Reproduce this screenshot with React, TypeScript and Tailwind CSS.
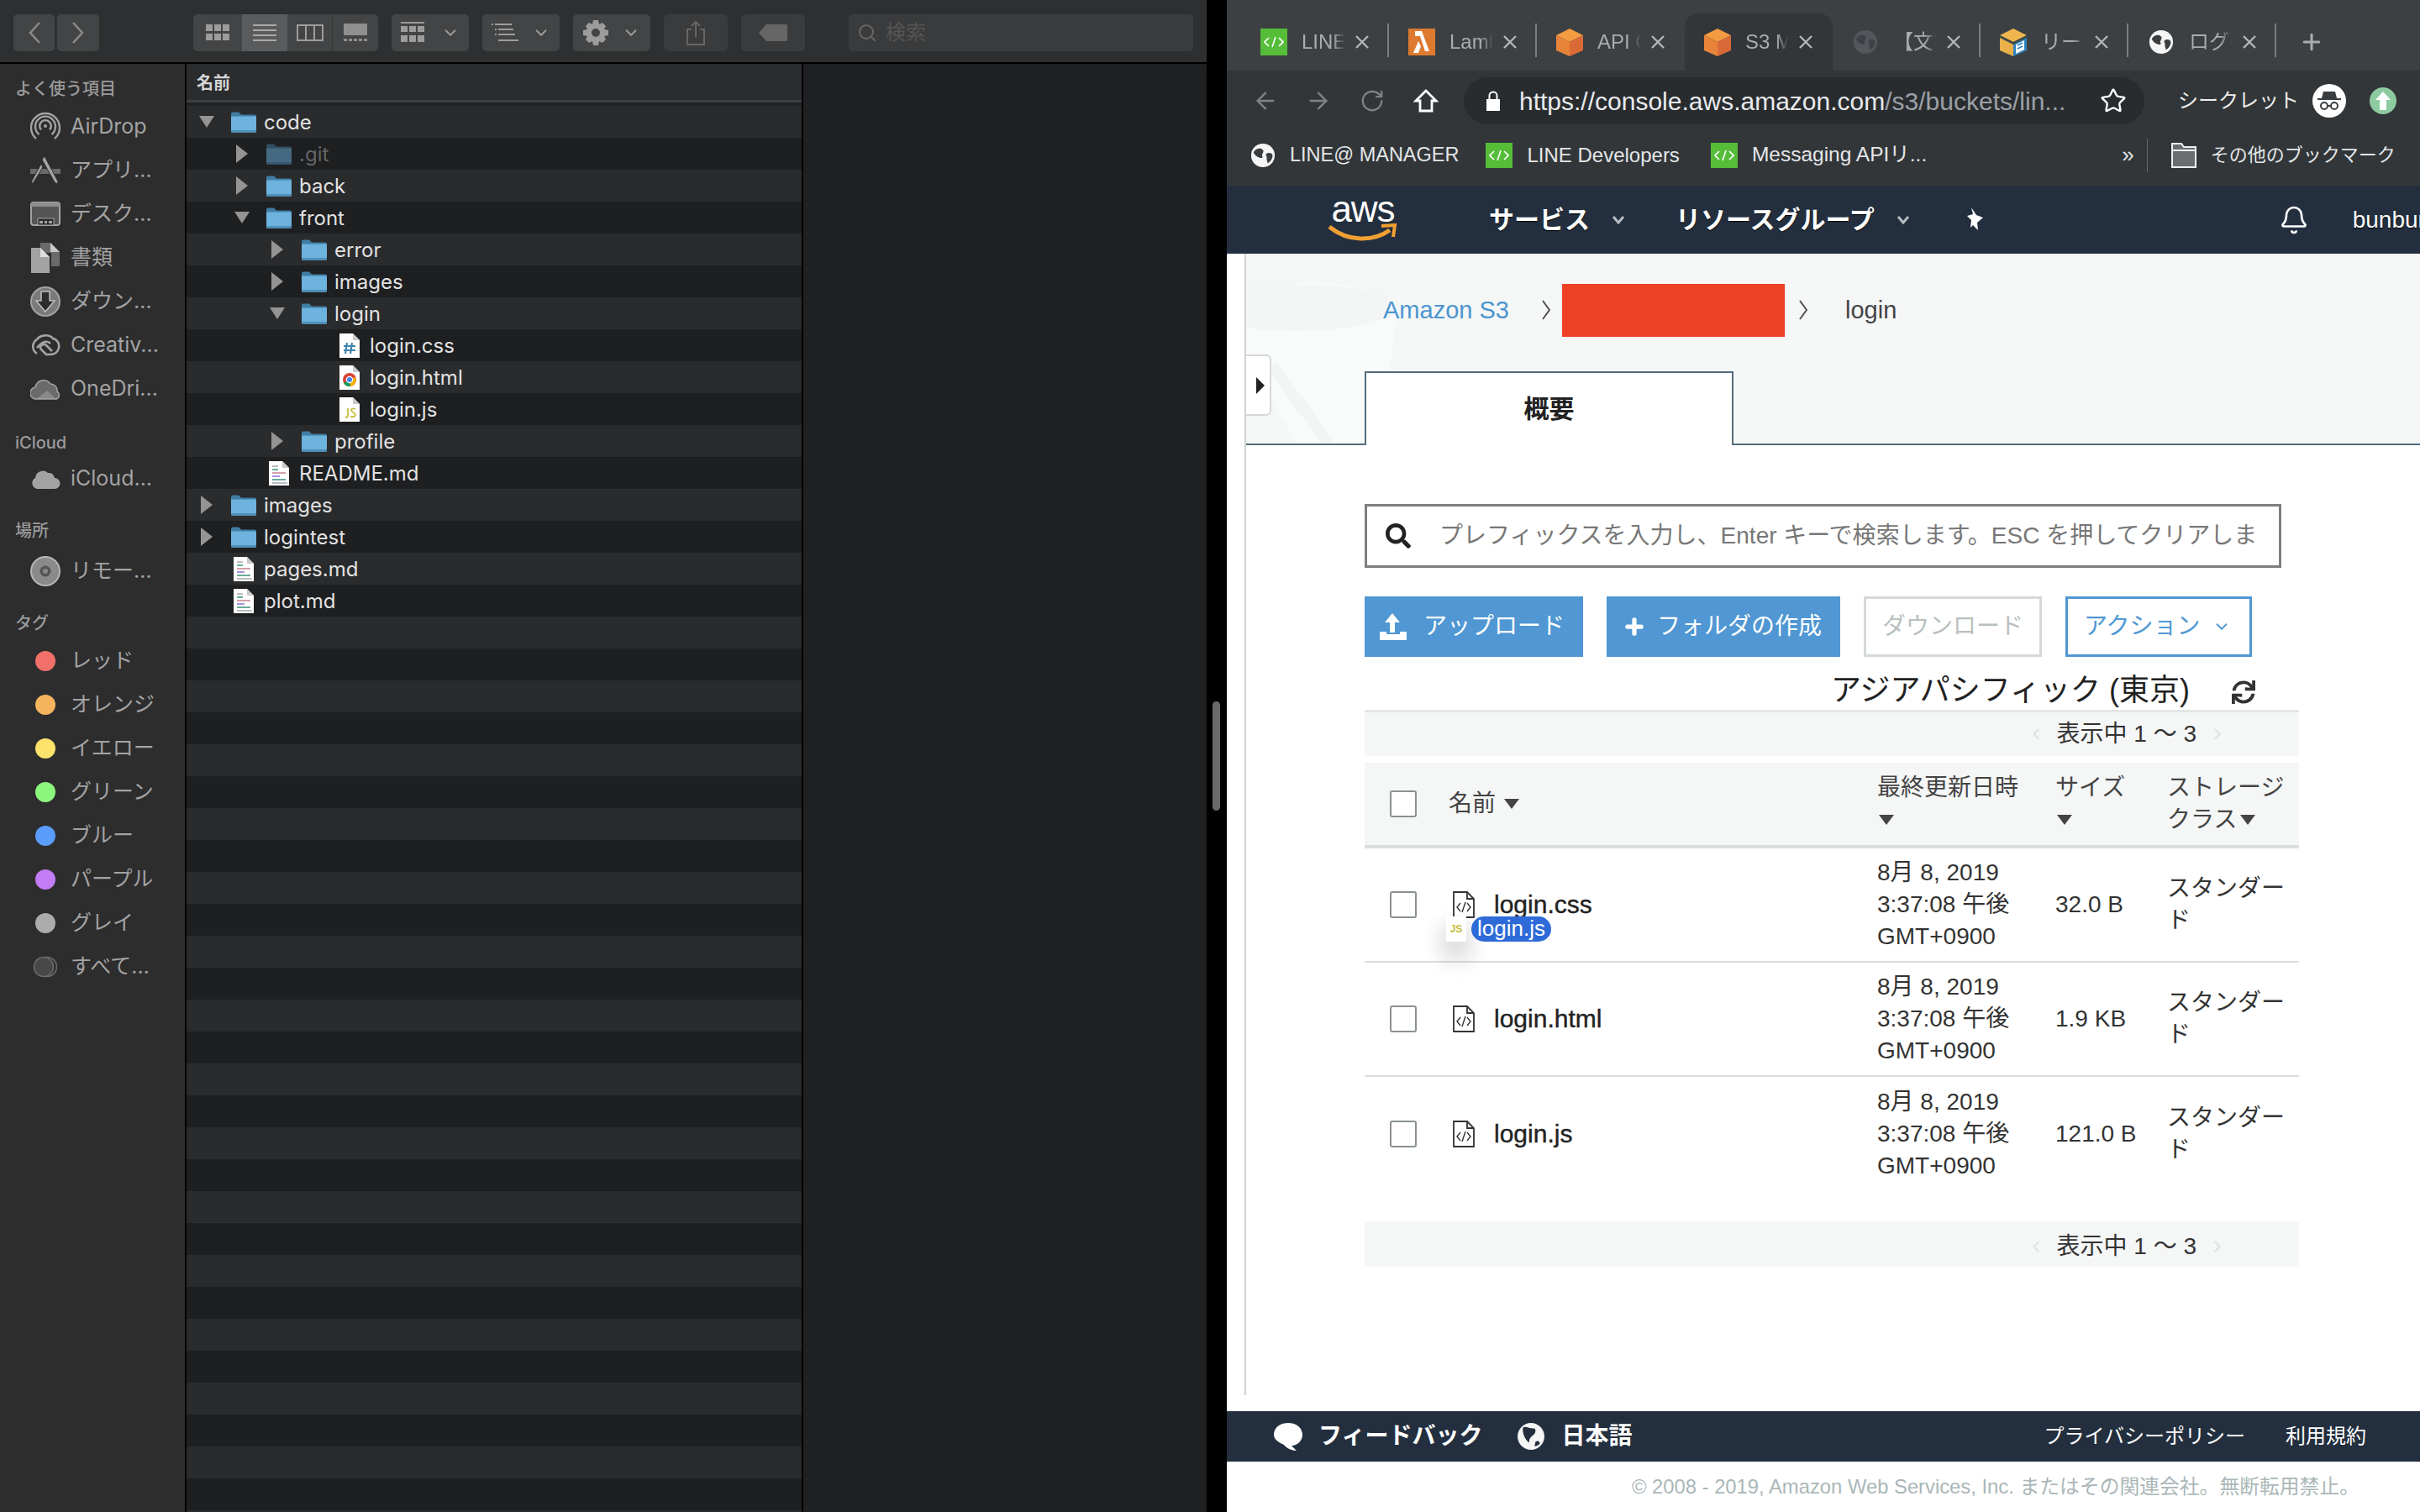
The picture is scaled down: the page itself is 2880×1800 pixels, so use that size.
import React from "react";
import { ArrowLeft, ArrowRight, RotateCw, Star, ChevronDown, ChevronRight, ChevronLeft, Plus, Bell, Search } from "lucide-react";
import { FaSearch, FaSync } from "react-icons/fa";

const Folder = ({ dim }: { dim?: boolean }) => (
  <svg width="30" height="25" viewBox="0 0 30 25" className={dim ? "opacity-50" : ""}>
    <path d="M0 2.5A2 2 0 0 1 2 .5h7l3 3h16a2 2 0 0 1 2 2V10H0z" fill="#3f7da3" />
    <path d="M0 5.5h30V23a2 2 0 0 1-2 2H2a2 2 0 0 1-2-2z" fill="#6db3de" />
    <path d="M0 22h30v1a2 2 0 0 1-2 2H2a2 2 0 0 1-2-2z" fill="#4f8fb8" />
  </svg>
);

const Sheet = ({ children }: { children?: React.ReactNode }) => (
  <svg width="24" height="29" viewBox="0 0 24 29">
    <path d="M0 0h16l8 8v21H0z" fill="#fff" />
    <path d="M16 0l8 8h-8z" fill="#c9c9c9" />
    {children}
  </svg>
);

const FileIcon = ({ kind }: { kind: string }) => {
  if (kind === "css")
    return (
      <Sheet>
        <path d="M9 11l-2 13M15 11l-2 13M5 15h14M5 20h14" stroke="#3f87ad" strokeWidth="2.2" fill="none" />
      </Sheet>
    );
  if (kind === "html")
    return (
      <Sheet>
        <circle cx="12" cy="17" r="8" fill="#db4437" />
        <path d="M12 17L5 21a8 8 0 0 0 8 4z" fill="#0f9d58" />
        <path d="M12 17l7-3a8 8 0 0 1-6 11z" fill="#f4b400" />
        <circle cx="12" cy="17" r="3.6" fill="#4285f4" stroke="#fff" strokeWidth="1.2" />
      </Sheet>
    );
  if (kind === "js")
    return (
      <Sheet>
        <path d="M10 13v9q0 2-3 2M19 14q-4-1.500-5 1c0 3 5 3 5 6q-1 3-6 2" stroke="#c5bd3c" strokeWidth="1.8" fill="none" />
      </Sheet>
    );
  return (
    <Sheet>
      <rect x="4" y="5" width="7" height="2" fill="#b9bfc0" />
      <rect x="4" y="9" width="7" height="2" fill="#69ab9d" />
      <rect x="4" y="13" width="16" height="2" fill="#d3a1a8" />
      <rect x="4" y="17" width="9" height="2" fill="#a992e0" />
      <rect x="4" y="21" width="16" height="2" fill="#69ab9d" />
      <rect x="4" y="25" width="18" height="2" fill="#b9bfc0" />
    </Sheet>
  );
};

const Tri = ({ dir }: { dir?: string }) =>
  dir === "r" ? (
    <svg width="16" height="24" viewBox="0 0 16 24"><path d="M1 1l14 11L1 23z" fill="#949494" /></svg>
  ) : dir === "d" ? (
    <svg width="20" height="16" viewBox="0 0 20 16"><path d="M1 1h18L10 15z" fill="#949494" /></svg>
  ) : null;

type TreeRow = { n: string; d: number; t?: string; k?: string; dim?: boolean };
const tree: TreeRow[] = [
  { n: "code", d: 0, t: "d" },
  { n: ".git", d: 1, t: "r", dim: true },
  { n: "back", d: 1, t: "r" },
  { n: "front", d: 1, t: "d" },
  { n: "error", d: 2, t: "r" },
  { n: "images", d: 2, t: "r" },
  { n: "login", d: 2, t: "d" },
  { n: "login.css", d: 3, k: "css" },
  { n: "login.html", d: 3, k: "html" },
  { n: "login.js", d: 3, k: "js" },
  { n: "profile", d: 2, t: "r" },
  { n: "README.md", d: 1, k: "md" },
  { n: "images", d: 0, t: "r" },
  { n: "logintest", d: 0, t: "r" },
  { n: "pages.md", d: 0, k: "md" },
  { n: "plot.md", d: 0, k: "md" },
];
const indent = ["pl-[13px]", "pl-[55px]", "pl-[97px]", "pl-[139px]"];
const blanks = Array.from({ length: 29 }, (_, i) => i);

const s = { stroke: "#a3a3a3", fill: "none" };
const SideIcons: Record<string, React.ReactNode> = {
  air: (
    <svg width="36" height="36" viewBox="0 0 36 36" {...s} strokeWidth="2.400">
      <path d="M7 32a17 17 0 1 1 22 0" />
      <path d="M10.500 27a12 12 0 1 1 15 0" />
      <path d="M13 21.500a6.800 6.800 0 1 1 10 0" />
      <circle cx="18" cy="17" r="2" fill="#a3a3a3" stroke="none" />
    </svg>
  ),
  app: (
    <svg width="36" height="36" viewBox="0 0 36 36">
      <path d="M0 16h36v6H0z" fill="#6a6a6a" />
      <path d="M17 1l16 30-1 3-3-2L14 5zM13 10L2 30l-1 4 3-2L15 14z" fill="#a3a3a3" stroke="#2d2d2e" strokeWidth="1" />
    </svg>
  ),
  desk: (
    <svg width="36" height="30" viewBox="0 0 36 30">
      <rect x="1" y="1" width="34" height="27" rx="3" fill="#555" stroke="#a3a3a3" strokeWidth="2" />
      <rect x="1" y="1" width="34" height="5" fill="#8e8e8e" />
      <rect x="9" y="20" width="19" height="8" fill="#2d2d2e" stroke="#a3a3a3" />
      <path d="M11 23h4v3h-4zM17 23h3v3h-3zM22 23h4v3h-4z" fill="#a3a3a3" />
    </svg>
  ),
  doc: (
    <svg width="34" height="36" viewBox="0 0 34 36">
      <path d="M11 0h12l11 11v17H24V12H11z" fill="#6a6a6a" />
      <path d="M23 0l11 11H23z" fill="#c9c9c9" />
      <path d="M0 6h11l11 11v19H0z" fill="#a3a3a3" />
      <path d="M11 6l11 11H11z" fill="#dedede" />
    </svg>
  ),
  down: (
    <svg width="36" height="36" viewBox="0 0 36 36">
      <circle cx="18" cy="18" r="17" fill="#7a7a7a" stroke="#a3a3a3" strokeWidth="2" />
      <path d="M13 6h10v11h6L18 30 7 17h6z" fill="#2d2d2e" stroke="#c0c0c0" strokeWidth="1.500" />
    </svg>
  ),
  cc: (
    <svg width="36" height="28" viewBox="0 0 36 28" {...s} strokeWidth="2.600">
      <path d="M8 24a10 10 0 0 1 0-17C12 2 22 0 27 6c5 1 8 6 7 11-1 5-5 8-10 8h-5l-6-6c-3-3 2-8 6-5l7 7" />
      <path d="M24 12c-3-4-9-2-12 1l-4 4" />
    </svg>
  ),
  one: (
    <svg width="36" height="26" viewBox="0 0 36 26">
      <path d="M8 25a7 7 0 0 1-2-14 10 10 0 0 1 18-4 8 8 0 0 1 8 9 5 5 0 0 1-1 9z" fill="#6a6a6a" stroke="#a3a3a3" strokeWidth="1.500" />
      <path d="M7 25l13-10 11 10z" fill="#a3a3a3" opacity=".55" />
    </svg>
  ),
  cloud: (
    <svg width="36" height="24" viewBox="0 0 36 24"><path d="M8 24a7 7 0 0 1-2-13 9 9 0 0 1 15-6 7 7 0 0 1 8 6 6.500 6.500 0 0 1 0 13z" fill="#a3a3a3" /></svg>
  ),
  disc: (
    <svg width="36" height="36" viewBox="0 0 36 36">
      <circle cx="18" cy="18" r="17" fill="#8a8a8a" stroke="#b5b5b5" strokeWidth="2" />
      <circle cx="18" cy="18" r="6.500" fill="#555" />
      <circle cx="18" cy="18" r="3" fill="#8a8a8a" />
    </svg>
  ),
};

const SideHead = ({ children, cls }: { children: React.ReactNode; cls: string }) => (
  <div className={`h-[28px] pl-[18px] text-[20px] leading-[28px] font-medium text-[#9b9b9b] ${cls}`}>{children}</div>
);
const SideItem = ({ icon, label }: { icon: React.ReactNode; label: string }) => (
  <div className="h-[52px] flex items-center">
    <div className="w-[36px] ml-[36px] flex justify-center shrink-0">{icon}</div>
    <span className="ml-[12px] text-[25px] text-[#a3a3a3] whitespace-nowrap">{label}</span>
  </div>
);
const Dot = ({ cls }: { cls: string }) => <div className={`w-[24px] h-[24px] rounded-full ${cls}`} />;

const Tool = ({ cls, children, dim }: { cls: string; children: React.ReactNode; dim?: boolean }) => (
  <div className={`h-[44px] rounded-[5px] flex items-center justify-center shrink-0 ${dim ? "bg-[#3a3b3c]" : "bg-[#434445]"} ${cls}`}>{children}</div>
);

const Finder = () => (
  <div className="w-[1436px] h-full flex flex-col bg-[#1f2022] [font-family:Inter,'Noto_Sans_CJK_JP',sans-serif]">
    <div className="h-[76px] shrink-0 bg-[#2e2f31] border-b-2 border-black flex items-center pl-[16px] pt-[4px]">
      <Tool cls="w-[49px]">
        <svg width="16" height="28" viewBox="0 0 16 28" fill="none" stroke="#8b8b8b" strokeWidth="2.500"><path d="M14 2L3 14l11 12" /></svg>
      </Tool>
      <Tool cls="w-[50px] ml-[3px]">
        <svg width="16" height="28" viewBox="0 0 16 28" fill="none" stroke="#8b8b8b" strokeWidth="2.500"><path d="M2 2l11 12L2 26" /></svg>
      </Tool>
      <div className="ml-[112px] w-[220px] h-[44px] rounded-[5px] bg-[#434445] flex overflow-hidden shrink-0">
        <div className="w-[58px] flex items-center justify-center">
          <svg width="28" height="20" viewBox="0 0 28 20" fill="#9c9c9c"><path d="M0 0h8v8H0zM10 0h8v8h-8zM20 0h8v8h-8zM0 11h8v8H0zM10 11h8v8h-8zM20 11h8v8h-8z" /></svg>
        </div>
        <div className="w-[54px] bg-[#5a5b5c] flex items-center justify-center">
          <svg width="28" height="20" viewBox="0 0 28 20" fill="#a9a9a9"><path d="M0 0h28v2H0zM0 6h28v2H0zM0 12h28v2H0zM0 18h28v2H0z" /></svg>
        </div>
        <div className="w-[54px] flex items-center justify-center border-r border-[#333]">
          <svg width="32" height="20" viewBox="0 0 32 20" fill="none" stroke="#9c9c9c" strokeWidth="2"><path d="M1 1h30v18H1zM11 1v18M21 1v18" /></svg>
        </div>
        <div className="w-[54px] flex items-center justify-center">
          <svg width="28" height="22" viewBox="0 0 28 22" fill="#8f8f8f"><path d="M0 0h28v14H0zM0 18h4v3H0zM6 18h4v3H6zM12 18h4v3h-4zM18 18h4v3h-4zM24 18h4v3h-4z" /></svg>
        </div>
      </div>
      <Tool cls="w-[92px] ml-[16px] gap-[20px]">
        <svg width="28" height="26" viewBox="0 0 28 26" fill="#9c9c9c"><path d="M0 0h28v2H0zM0 5h8v7H0zM10 5h8v7h-8zM20 5h8v7h-8zM0 16h8v8H0zM10 16h8v8h-8zM20 16h8v8h-8z" /></svg>
        <ChevronDown size={22} color="#9c9c9c" />
      </Tool>
      <Tool cls="w-[92px] ml-[16px] gap-[16px]">
        <svg width="32" height="22" viewBox="0 0 32 22" fill="#9c9c9c"><path d="M4 0h20v2H4zM8 6h18v2H8zM8 12h20v2H8zM8 19h24v2H8zM0 0h2v2H0zM4 6h2v2H4zM4 12h2v2H4z" /></svg>
        <ChevronDown size={22} color="#9c9c9c" />
      </Tool>
      <Tool cls="w-[92px] ml-[16px] gap-[16px]">
        <svg width="30" height="30" viewBox="0 0 30 30" fill="#9c9c9c"><path fillRule="evenodd" d="M12 0h6l1 5 4-2 4 4-2 4 5 1v6l-5 1 2 4-4 4-4-2-1 5h-6l-1-5-4 2-4-4 2-4-5-1v-6l5-1-2-4 4-4 4 2zM15 10a5 5 0 1 0 0 10 5 5 0 0 0 0-10z" /></svg>
        <ChevronDown size={22} color="#9c9c9c" />
      </Tool>
      <Tool cls="w-[76px] ml-[16px]" dim>
        <svg width="24" height="30" viewBox="0 0 24 30" fill="none" stroke="#666" strokeWidth="2"><path d="M7 11H2v18h20V11h-5M12 20V2M7 7l5-5 5 5" /></svg>
      </Tool>
      <Tool cls="w-[76px] ml-[16px]" dim>
        <svg width="34" height="20" viewBox="0 0 34 20" fill="#666"><path d="M9 0h23a2 2 0 0 1 2 2v16a2 2 0 0 1-2 2H9L0 10z" /></svg>
      </Tool>
      <div className="ml-[52px] w-[410px] h-[44px] rounded-[5px] bg-[#3a3b3c] flex items-center pl-[10px] gap-[10px] shrink-0">
        <Search size={24} color="#666" />
        <span className="text-[24px] text-[#555]">検索</span>
      </div>
    </div>
    <div className="flex-1 flex min-h-0">
      <div className="w-[220px] shrink-0 bg-[#2d2d2e] pt-[16px]">
        <SideHead cls="">よく使う項目</SideHead>
        <div className="mt-[5px]">
          <SideItem icon={SideIcons.air} label="AirDrop" />
          <SideItem icon={SideIcons.app} label="アプリ…" />
          <SideItem icon={SideIcons.desk} label="デスク…" />
          <SideItem icon={SideIcons.doc} label="書類" />
          <SideItem icon={SideIcons.down} label="ダウン…" />
          <SideItem icon={SideIcons.cc} label="Creativ..." />
          <SideItem icon={SideIcons.one} label="OneDri..." />
        </div>
        <SideHead cls="mt-[24px]">iCloud</SideHead>
        <div className="mt-[3px]"><SideItem icon={SideIcons.cloud} label="iCloud..." /></div>
        <SideHead cls="mt-[22px]">場所</SideHead>
        <div className="mt-[8px]"><SideItem icon={SideIcons.disc} label="リモー…" /></div>
        <SideHead cls="mt-[22px]">タグ</SideHead>
        <div className="mt-[5px]">
          <SideItem icon={<Dot cls="bg-[#f1716a]" />} label="レッド" />
          <SideItem icon={<Dot cls="bg-[#f6b45f]" />} label="オレンジ" />
          <SideItem icon={<Dot cls="bg-[#fde36c]" />} label="イエロー" />
          <SideItem icon={<Dot cls="bg-[#8bf67c]" />} label="グリーン" />
          <SideItem icon={<Dot cls="bg-[#5a9dfb]" />} label="ブルー" />
          <SideItem icon={<Dot cls="bg-[#c47cf5]" />} label="パープル" />
          <SideItem icon={<Dot cls="bg-[#acacac]" />} label="グレイ" />
          <SideItem
            icon={
              <svg width="30" height="26" viewBox="0 0 30 26" fill="none" stroke="#6c6c6c" strokeWidth="1.500">
                <circle cx="17" cy="13" r="11.500" />
                <circle cx="13" cy="13" r="11.500" fill="#484848" />
              </svg>
            }
            label="すべて…"
          />
        </div>
      </div>
      <div className="w-[736px] shrink-0 border-x-2 border-black bg-[#1f2022] flex flex-col overflow-hidden">
        <div className="h-[46px] shrink-0 bg-[#2b2c2e] border-b-[3px] border-[#3e3f41] pl-[12px] pt-[2px] flex items-center text-[20px] font-bold text-[#d6d6d6]">名前</div>
        <div className="h-[4px] shrink-0 bg-[#212224]" />
        {tree.map((r, i) => (
          <div key={i} className={`h-[38px] shrink-0 flex items-center ${indent[r.d]} ${i % 2 === 0 ? "bg-[#2a2b2d]" : "bg-[#1e1f21]"}`}>
            <div className="w-[22px] flex justify-center shrink-0"><Tri dir={r.t} /></div>
            <div className="w-[30px] ml-[18px] flex justify-center shrink-0">
              {r.k ? <FileIcon kind={r.k} /> : <Folder dim={r.dim} />}
            </div>
            <span className={`ml-[9px] pt-[1px] text-[24px] whitespace-nowrap ${r.dim ? "text-[#646566]" : "text-[#e2e2e2]"}`}>{r.n}</span>
          </div>
        ))}
        {blanks.map((i) => (
          <div key={i} className={`h-[38px] shrink-0 ${i % 2 === 0 ? "bg-[#2a2b2d]" : "bg-[#1e1f21]"}`} />
        ))}
      </div>
      <div className="flex-1 bg-[#1f2022]" />
    </div>
  </div>
);

const Cube = () => (
  <svg width="32" height="33" viewBox="0 0 32 33">
    <path d="M16 0l16 8-16 8L0 8z" fill="#f29b41" />
    <path d="M0 8l16 8v17L0 26z" fill="#e8843a" />
    <path d="M32 8l-16 8v17l16-7z" fill="#d96a38" />
  </svg>
);
const CodeIco = ({ small }: { small?: boolean }) => (
  <div className={`bg-[#56bd39] flex items-center justify-center shrink-0 ${small ? "w-[32px] h-[30px]" : "w-[32px] h-[32px]"}`}>
    <svg width="24" height="14" viewBox="0 0 24 14" fill="none" stroke="#fff" strokeWidth="1.600"><path d="M6 2L1 7l5 5M18 2l5 5-5 5M14 1l-4 12" /></svg>
  </div>
);
const GlobeIco = ({ size = 32, dim }: { size?: number; dim?: boolean }) => (
  <svg width={size} height={size} viewBox="0 0 32 32">
    <circle cx="16" cy="16" r="15" fill={dim ? "#53575b" : "#f5f5f5"} />
    <path d="M4 12c3-5 9-6 12-3 2 3-2 5-1 8 2 1-1 3-3 2-4-1-7-4-8-7zM20 14c3-2 7-1 8 1 1 4-2 9-6 11 0-3-2-4-1-7 0-2-2-3-1-5z" fill={dim ? "#3d4044" : "#3a3d40"} />
  </svg>
);
const tabs: { ico: React.ReactNode; t: string; active?: boolean; nosep?: boolean }[] = [
  { ico: <CodeIco />, t: "LINE Developers" },
  {
    ico: (
      <div className="w-[32px] h-[32px] bg-[#dd7a2f] flex items-center justify-center">
        <svg width="22" height="26" viewBox="0 0 22 26" fill="#fff"><path d="M3 0h8l9 24h-5L9 6H3zM7 12l3 6-3 8H1z" /></svg>
      </div>
    ),
    t: "Lambda",
  },
  { ico: <Cube />, t: "API Gateway", nosep: true },
  { ico: <Cube />, t: "S3 Management", active: true, nosep: true },
  { ico: <GlobeIco size={30} dim />, t: "【文字" },
  {
    ico: (
      <svg width="32" height="33" viewBox="0 0 32 33">
        <path d="M16 0l16 8-16 8L0 8z" fill="#f0b64e" />
        <path d="M16 16L0 8v3l16 8 16-8V8z" fill="#3f4a4d" />
        <path d="M0 11l16 8v14L0 26z" fill="#e9b04a" />
        <path d="M32 11l-16 8v14l16-7z" fill="#2e84bf" />
        <path d="M19 19l10-5v11l-10 5z" fill="#fff" />
        <path d="M21 20l6-3M21 24l6-3" stroke="#2e84bf" strokeWidth="1.800" />
      </svg>
    ),
    t: "リーダー",
  },
  { ico: <GlobeIco size={30} />, t: "ログイン" },
];

const Chrome = () => (
  <>
    <div className="h-[84px] shrink-0 bg-[#3d4043] flex items-end pl-[17px]">
      {tabs.map((t, i) => (
        <div key={i} className={`w-[176px] h-[68px] shrink-0 flex items-center pl-[23px] rounded-t-[16px] ${t.active ? "bg-[#323639]" : ""}`}>
          <div className="w-[32px] h-[44px] flex items-center justify-center shrink-0">{t.ico}</div>
          <span className="ml-[17px] w-[52px] shrink-0 overflow-hidden whitespace-nowrap text-[24px] text-[#a9acaf] [mask-image:linear-gradient(to_right,black_72%,transparent)]">{t.t}</span>
          <svg width="18" height="18" viewBox="0 0 18 18" className="ml-[11px] shrink-0" stroke="#b3b6b9" strokeWidth="2.400"><path d="M2 2l14 14M16 2L2 16" /></svg>
          <div className="flex-1" />
          {!t.nosep && !t.active && <div className="w-[2px] h-[40px] bg-[#7b7e81] mt-[-4px]" />}
        </div>
      ))}
      <div className="h-[68px] flex items-center pl-[27px]">
        <Plus size={30} color="#a9acaf" strokeWidth={2.500} />
      </div>
    </div>
    <div className="h-[68px] shrink-0 bg-[#323639] flex items-center pl-[30px] pt-[4px]">
      <ArrowLeft size={32} color="#7f8386" strokeWidth={1.800} />
      <ArrowRight size={32} color="#7f8386" strokeWidth={1.800} className="ml-[31px]" />
      <RotateCw size={30} color="#7f8386" strokeWidth={1.800} className="ml-[33px]" />
      <svg width="30" height="30" viewBox="0 0 30 30" className="ml-[34px]" fill="none" stroke="#fff" strokeWidth="2.800"><path d="M15 3L3 15h5v12h14V15h5z" /></svg>
      <div className="ml-[30px] w-[810px] h-[56px] rounded-[28px] bg-[#292c2f] flex items-center pl-[26px]">
        <svg width="18" height="24" viewBox="0 0 18 24" fill="#fff"><path d="M1 10h16v14H1z" /><path d="M4.500 10V6a4.500 4.500 0 0 1 9 0v4" fill="none" stroke="#fff" strokeWidth="2" /></svg>
        <span className="ml-[22px] w-[658px] shrink-0 whitespace-nowrap overflow-hidden text-[30px] text-[#e8eaed]">
          https://<span>console.aws.amazon.com</span><span className="text-[#9aa0a6]">/s3/buckets/lin...</span>
        </span>
        <Star size={32} color="#ffffff" strokeWidth={1.800} className="ml-[33px]" />
      </div>
      <span className="ml-[40px] text-[24px] text-[#eee] whitespace-nowrap">シークレット</span>
      <div className="ml-[16px] w-[40px] h-[40px] rounded-full bg-white flex items-center justify-center">
        <svg width="30" height="26" viewBox="0 0 30 26"><path d="M8 2h14l2 8h5v2H1v-2h5z" fill="#3a3d40" /><circle cx="9" cy="19" r="4" fill="none" stroke="#3a3d40" strokeWidth="2" /><circle cx="21" cy="19" r="4" fill="none" stroke="#3a3d40" strokeWidth="2" /><path d="M13 19h4" stroke="#3a3d40" strokeWidth="2" /></svg>
      </div>
      <div className="ml-[28px] w-[32px] h-[32px] rounded-full bg-[#8ecaa0] flex items-center justify-center">
        <svg width="18" height="22" viewBox="0 0 18 22" fill="#fff"><path d="M9 0l9 10h-5v12H5V10H0z" /></svg>
      </div>
    </div>
    <div className="h-[69px] shrink-0 bg-[#323639] flex items-center pl-[28px] pb-[4px] text-[24px] text-[#e4e6e8] whitespace-nowrap">
      <GlobeIco size={30} />
      <span className="ml-[17px] text-[23.5px]">LINE@ MANAGER</span>
      <div className="ml-[32px]"><CodeIco small /></div>
      <span className="ml-[17px]">LINE Developers</span>
      <div className="ml-[37px]"><CodeIco small /></div>
      <span className="ml-[17px] text-[24.5px]">Messaging APIリ...</span>
      <span className="ml-[232px] text-[26px]">»</span>
      <div className="ml-[15px] w-[1px] h-[40px] bg-[#63676a]" />
      <svg width="32" height="30" viewBox="0 0 32 30" className="ml-[27px] shrink-0"><path d="M2 1h11l3 4h14v24H2z" fill="#6a6d70" stroke="#eee" strokeWidth="2" /><path d="M2 9h28" stroke="#eee" strokeWidth="2" /></svg>
      <span className="ml-[16px] text-[22px]">その他のブックマーク</span>
    </div>
  </>
);

const Caret = () => <svg width="18" height="12" viewBox="0 0 18 12" className="shrink-0"><path d="M0 0h18L9 12z" fill="#444" /></svg>;
const NavCaret = () => <svg width="16" height="10" viewBox="0 0 16 10" fill="none" stroke="#b8bcc2" strokeWidth="3"><path d="M2 1l6 7 6-7" /></svg>;
const Crumb = ({ cls }: { cls: string }) => (
  <svg width="12" height="26" viewBox="0 0 12 26" fill="none" stroke="#444" strokeWidth="1.800" className={`shrink-0 ${cls}`}><path d="M2 2l8 11-8 11" /></svg>
);

const DocIco = () => (
  <svg width="28" height="32" viewBox="0 0 28 32" fill="none" stroke="#333" strokeWidth="1.800" className="shrink-0">
    <path d="M2 1h16l8 8v22H2z" /><path d="M18 1v8h8" />
    <path d="M10 14l-4 5 4 5M18 14l4 5-4 5M16 13l-4 12" strokeWidth="1.400" />
  </svg>
);
const Check = () => <div className="w-[32px] h-[32px] rounded-[3px] border-2 border-[#8a9191] bg-white shrink-0" />;

const Pager = ({ cls }: { cls: string }) => (
  <div className={`bg-[#f5f6f6] flex items-center justify-end pr-[86px] gap-[14px] text-[28px] text-[#333] ${cls}`}>
    <ChevronLeft size={22} color="#dfe2e2" />
    <span>表示中 1 〜 3</span>
    <ChevronRight size={22} color="#dfe2e2" />
  </div>
);

const files = [
  { n: "login.css", s: "32.0 B" },
  { n: "login.html", s: "1.9 KB" },
  { n: "login.js", s: "121.0 B" },
];

const Btn = ({ cls, children }: { cls: string; children: React.ReactNode }) => (
  <div className={`h-[72px] flex items-center shrink-0 text-[28px] whitespace-nowrap ${cls}`}>{children}</div>
);

const Console = () => (
  <div className="flex-1 min-h-0 flex bg-white">
    <div className="w-[21px] shrink-0" />
    <div className="flex-1 min-w-0 h-[1359px] border-l-2 border-[#cfd3d3] flex flex-col">
      <div className="relative h-[228px] shrink-0 bg-[#f5f6f6] border-b-2 border-[#546b7c]">
        <svg width="200" height="204" viewBox="0 0 200 204" className="absolute left-0 top-[22px]" fill="none">
          <path d="M-10 30c60-30 170-20 190 15l-20 160H60L0 100" fill="#f9fafa" />
          <ellipse cx="60" cy="42" rx="120" ry="28" fill="#f4f6f6" />
          <path d="M30 110l68 94" stroke="#f3f5f5" strokeWidth="14" />
        </svg>
        <div className="relative flex items-center h-[134px] pl-[163px] text-[29px]">
          <span className="text-[#4b95cf] w-[188px] shrink-0 mt-[2px]">Amazon S3</span>
          <Crumb cls="" />
          <div className="w-[265px] h-[63px] bg-[#ee4125] ml-[13px] shrink-0" />
          <Crumb cls="ml-[16px]" />
          <span className="ml-[44px] mt-[2px] text-[#444]">login</span>
        </div>
        <div className="absolute left-0 top-[120px] w-[30px] h-[73px] bg-white border-2 border-l-0 border-[#d5d9d9] rounded-r-[6px] flex items-center pl-[12px]">
          <svg width="10" height="20" viewBox="0 0 10 20"><path d="M0 0l10 10L0 20z" fill="#222" /></svg>
        </div>
        <div className="absolute left-[141px] top-[140px] w-[439px] h-[88px] bg-white border-2 border-b-0 border-[#546b7c] flex items-center justify-center pb-[2px] text-[30px] font-bold text-[#222]">概要</div>
      </div>
      <div className="ml-[141px] mr-[144px] flex flex-col">
        <div className="mt-[70px] w-[1091px] h-[76px] border-[3px] border-[#7f7f7f] flex items-center pl-[22px] overflow-hidden">
          <FaSearch size={30} color="#222" className="shrink-0" />
          <span className="ml-[34px] text-[28px] text-[#777] whitespace-nowrap">プレフィックスを入力し、Enter キーで検索します。ESC を押してクリアしま</span>
        </div>
        <div className="mt-[34px] flex gap-[28px]">
          <Btn cls="w-[260px] bg-[#5097d3] text-white pl-[18px]">
            <svg width="32" height="32" viewBox="0 0 32 32" fill="#fff"><path d="M15 0l9 11h-6v12h-6V11H6z" /><path d="M0 22h8v3h16v-3h8v10H0z" /></svg>
            <span className="ml-[20px]">アップロード</span>
          </Btn>
          <Btn cls="w-[278px] bg-[#5097d3] text-white pl-[19px]">
            <Plus size={28} color="#fff" strokeWidth={4.500} />
            <span className="ml-[13px]">フォルダの作成</span>
          </Btn>
          <Btn cls="w-[212px] border-[3px] border-[#d5d9d9] text-[#b8bfbf] justify-center">ダウンロード</Btn>
          <Btn cls="w-[222px] border-[3px] border-[#5097d3] text-[#5097d3] pl-[19px]">
            アクション
            <ChevronDown size={22} color="#5097d3" className="ml-[14px]" />
          </Btn>
        </div>
        <div className="h-[63px] flex items-center pt-[16px] pl-[555px] text-[36px] text-[#222] whitespace-nowrap">
          アジアパシフィック (東京)
          <FaSync size={28} color="#333" className="ml-[50px] mt-[4px] shrink-0" />
        </div>
        <Pager cls="h-[55px] border-t-[3px] border-[#e5e7e7]" />
        <div className="mt-[8px] h-[102px] bg-[#f5f6f6] border-b-4 border-[#dcdede] flex items-center text-[28px] leading-[38px] text-[#444]">
          <div className="w-[100px] pl-[30px] shrink-0"><Check /></div>
          <div className="w-[510px] shrink-0 flex items-center gap-[10px]">名前<Caret /></div>
          <div className="w-[212px] shrink-0">最終更新日時<div className="h-[38px] pl-[2px] flex items-center"><Caret /></div></div>
          <div className="w-[133px] shrink-0">サイズ<div className="h-[38px] pl-[2px] flex items-center"><Caret /></div></div>
          <div className="w-[155px] shrink-0">ストレージ<div className="flex items-center gap-[4px]">クラス<Caret /></div></div>
        </div>
        <div className="relative">
          {files.map((f, i) => (
            <div key={i} className={`h-[136px] flex items-center text-[28px] leading-[38px] text-[#333] ${i < 2 ? "border-b-2 border-[#dcdede]" : ""}`}>
              <div className="w-[100px] pl-[30px] shrink-0"><Check /></div>
              <div className="w-[510px] shrink-0 flex items-center">
                <div className="ml-[4px]"><DocIco /></div>
                <span className="ml-[22px] text-[30px] text-[#222] [-webkit-text-stroke:0.4px_#222]">{f.n}</span>
              </div>
              <div className="w-[212px] shrink-0 whitespace-nowrap">8月 8, 2019<br />3:37:08 午後<br />GMT+0900</div>
              <div className="w-[133px] shrink-0">{f.s}</div>
              <div className="w-[155px] shrink-0">スタンダー<br />ド</div>
            </div>
          ))}
          <div className="absolute left-[97px] top-[81px] flex items-center gap-[6px]">
            <div className="w-[24px] h-[30px] bg-white shadow-[0_16px_24px_6px_rgba(0,0,0,0.14)] flex items-center justify-center text-[12px] font-bold text-[#c5bd3c]">JS</div>
            <span className="h-[30px] px-[7px] rounded-[15px] bg-[#2f6bd8] text-white text-[26px] leading-[28px]">login.js</span>
          </div>
        </div>
        <Pager cls="mt-[36px] h-[54px] pt-[6px]" />
      </div>
    </div>
  </div>
);

const AwsNav = () => (
  <div className="h-[81px] shrink-0 bg-[#232f3e] flex items-center text-white text-[30px] font-bold whitespace-nowrap [text-shadow:0_1px_1px_#000]">
    <div className="ml-[122px] w-[80px] h-[60px] flex flex-col items-center shrink-0">
      <span className="text-[44px] leading-[34px] font-normal [text-shadow:none] tracking-[-1px]">aws</span>
      <svg width="84" height="22" viewBox="0 0 84 22" fill="none"><path d="M2 4c22 18 52 18 72 4" stroke="#f0a033" strokeWidth="5" /><path d="M64 3l16-1-2 14" stroke="#f0a033" strokeWidth="4" /></svg>
    </div>
    <span className="ml-[110px]">サービス</span>
    <div className="ml-[26px]"><NavCaret /></div>
    <span className="ml-[60px]">リソースグループ</span>
    <div className="ml-[26px]"><NavCaret /></div>
    <svg width="24" height="32" viewBox="0 0 24 32" fill="#fff" className="ml-[64px] shrink-0"><path d="M9 1l6 9 8 3-7 6 1 9-6-6-3 3 1-9-5-5 7-2z" /></svg>
    <Bell size={36} color="#fff" strokeWidth={1.800} className="ml-[351px] shrink-0" />
    <span className="ml-[52px] font-normal text-[28px]">bunbun</span>
  </div>
);

const Footer = () => (
  <>
    <div className="h-[60px] shrink-0 bg-[#232f3e] flex items-center text-white whitespace-nowrap pl-[55px] pr-[64px]">
      <svg width="36" height="34" viewBox="0 0 36 34" fill="#fff"><path d="M18 1c10 0 17 6 17 14 0 7-6 13-13 13l6 6c-6 0-12-3-15-7C6 24 1 20 1 15 1 7 8 1 18 1z" /></svg>
      <span className="ml-[18px] text-[28px] font-bold">フィードバック</span>
      <svg width="34" height="34" viewBox="0 0 32 32" className="ml-[41px]"><circle cx="16" cy="16" r="15" fill="#f5f5f5" /><path d="M7 6c4-2 8 2 13 1 2 2 1 6-2 8s-4 4-4 8c-4-3-8-10-7-17zM21 22c3-2 5 0 5 2-2 2-4 3-6 3z" fill="#232f3e" /></svg>
      <span className="ml-[19px] text-[28px] font-bold">日本語</span>
      <div className="flex-1" />
      <span className="text-[24px]">プライバシーポリシー</span>
      <span className="ml-[48px] text-[24px]">利用規約</span>
    </div>
    <div className="h-[60px] shrink-0 bg-white flex items-center justify-end pr-[72px] text-[23.8px] text-[#aab7b8] whitespace-nowrap">© 2008 - 2019, Amazon Web Services, Inc. またはその関連会社。無断転用禁止。</div>
  </>
);

export default function App() {
  return (
    <div className="w-[2880px] h-[1800px] flex bg-black overflow-hidden">
      <Finder />
      <div className="w-[24px] shrink-0 pl-[7px] pt-[835px]">
        <div className="w-[9px] h-[130px] rounded-full bg-[#6a6a6a]" />
      </div>
      <div className="w-[1420px] h-full shrink-0 flex flex-col bg-white overflow-hidden [font-family:'Liberation_Sans','Noto_Sans_CJK_JP',sans-serif]">
        <Chrome />
        <AwsNav />
        <Console />
        <Footer />
      </div>
    </div>
  );
}
